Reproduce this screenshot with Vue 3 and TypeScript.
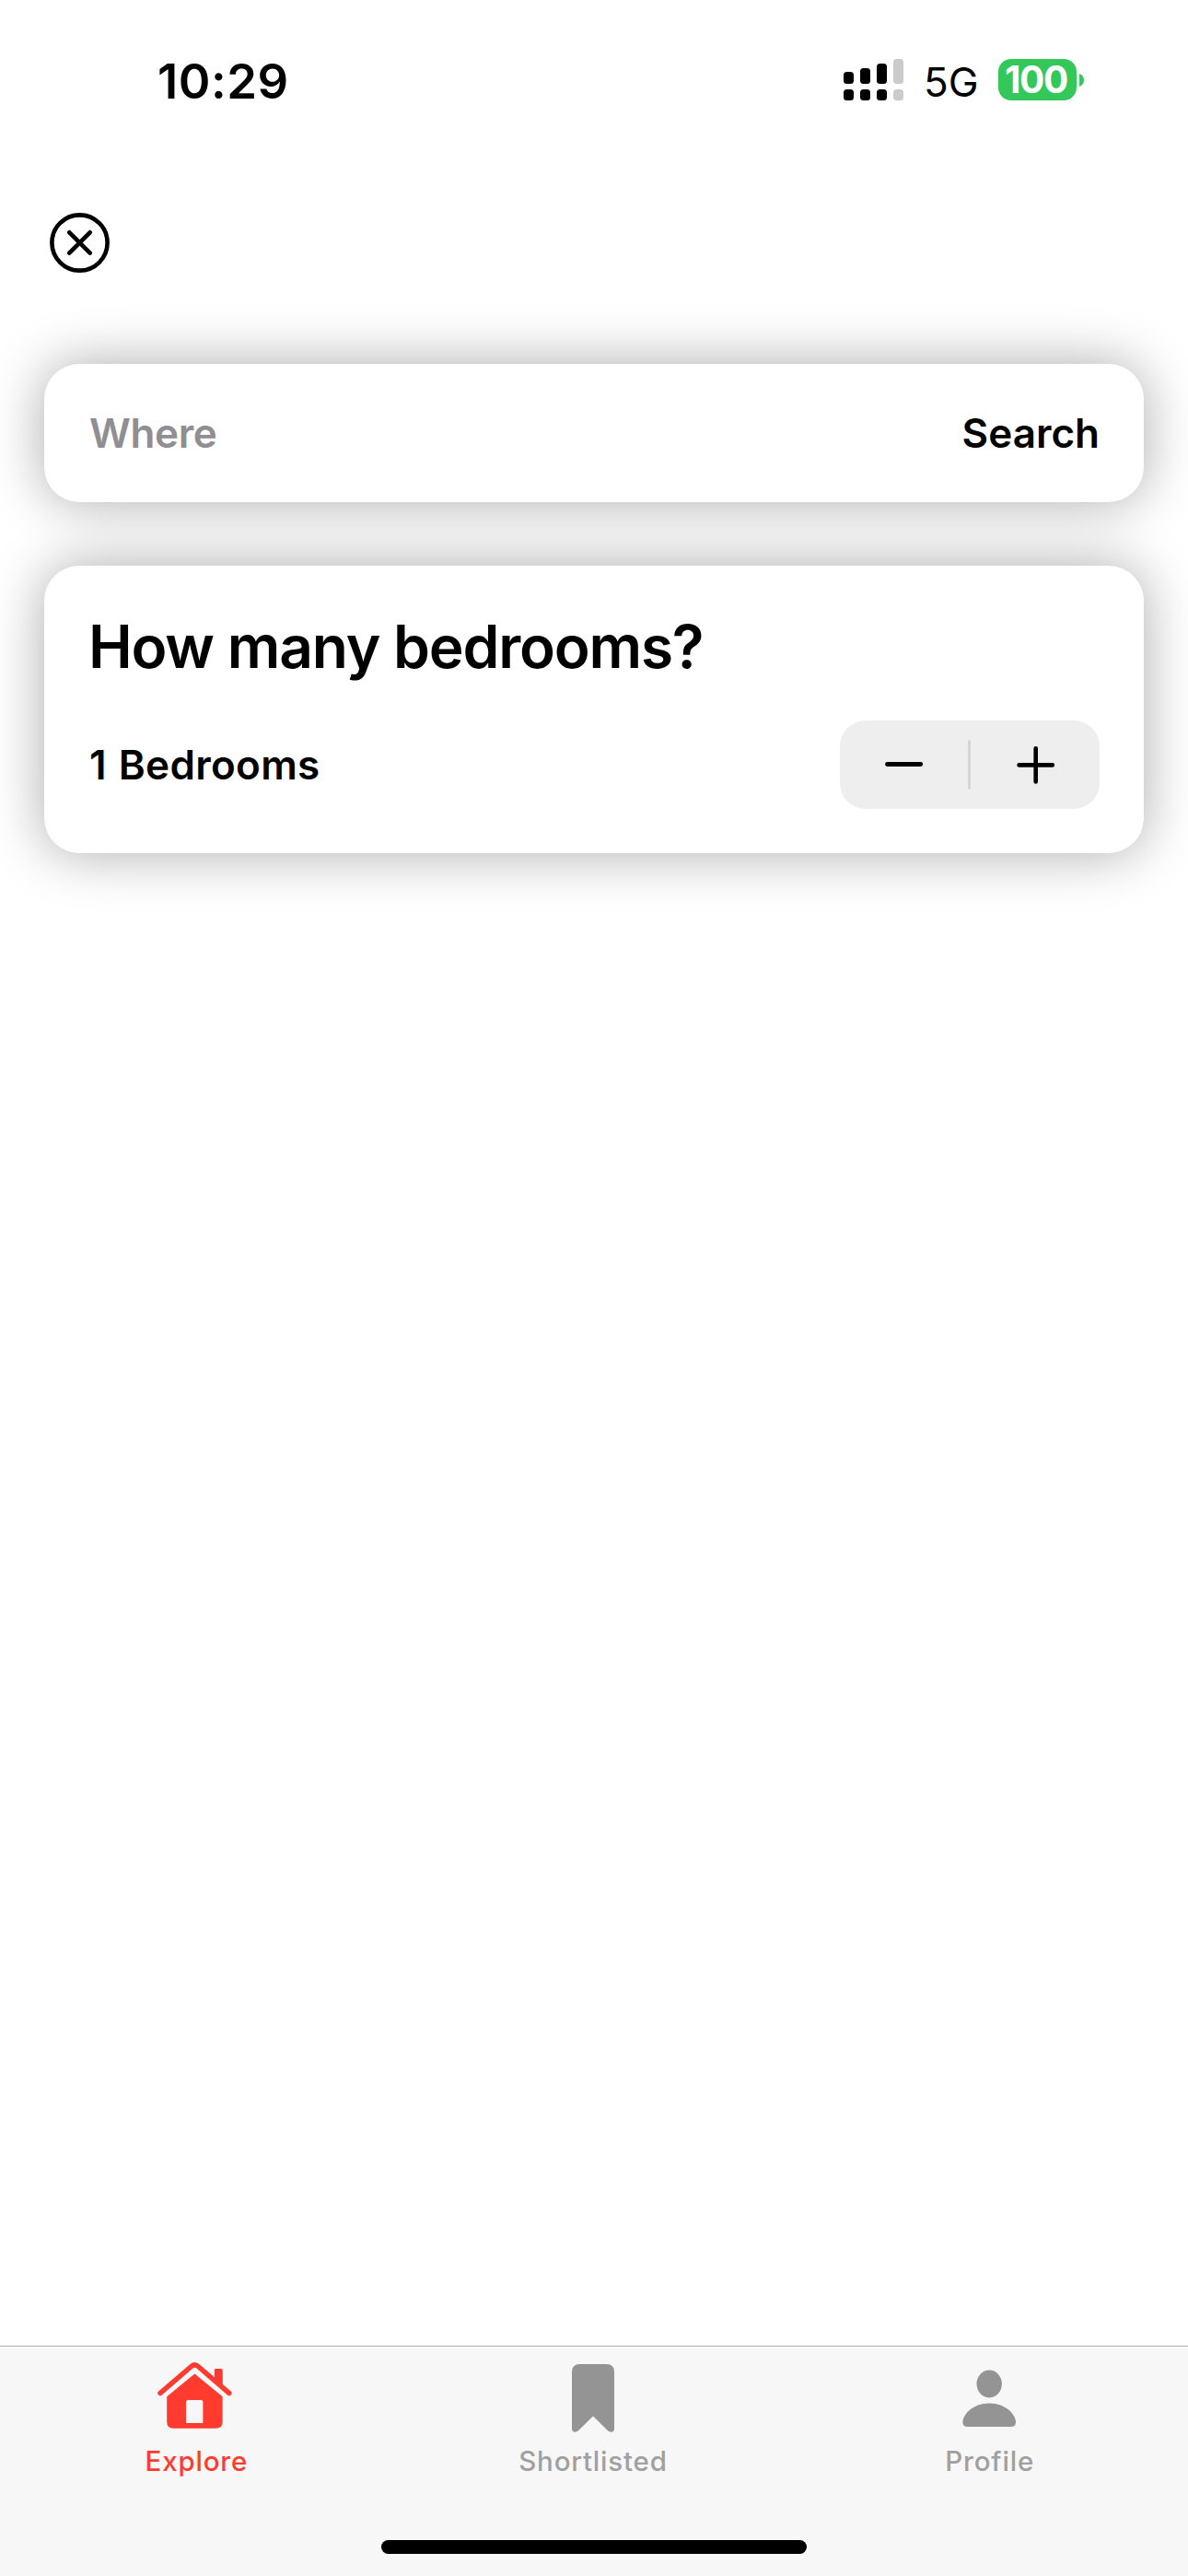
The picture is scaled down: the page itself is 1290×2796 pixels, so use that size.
<script setup lang="ts">
import { ref } from 'vue'

const where = ref('')
const bedrooms = ref(1)
const active = ref('Explore')

const bars = [13, 17, 22, 27]
const tabs = ['Explore', 'Shortlisted', 'Profile']

function change(step: number): void {
  bedrooms.value = Math.max(0, bedrooms.value + step)
}
</script>

<template>
  <div class="screen">
    <header class="status">
      <span class="time">10:29</span>
      <div class="indicators">
        <div class="signal">
          <div v-for="(h, i) in bars" :key="h" class="bar" :class="{ off: i === 3 }">
            <i :style="{ height: h + 'px' }"></i>
            <i class="dot"></i>
          </div>
        </div>
        <span class="network">5G</span>
        <div class="battery"><span>100</span></div>
        <svg class="nub" width="5" height="14" viewBox="0 0 5 14"><path d="M0 0Q5 2 5 7T0 14Z" fill="#34c759" /></svg>
      </div>
    </header>

    <button class="close" aria-label="Close">
      <svg width="67" height="67" viewBox="0 0 67 67" fill="none" stroke="#000" stroke-width="4.6" stroke-linecap="round">
        <circle cx="33.5" cy="33.5" r="30.1" />
        <path d="M22.3 22.3 44.7 44.7M44.7 22.3 22.3 44.7" />
      </svg>
    </button>

    <main class="cards">
      <section class="card search">
        <span class="where">{{ where || 'Where' }}</span>
        <span class="go">Search</span>
      </section>

      <section class="card rooms">
        <h1>How many bedrooms?</h1>
        <div class="row">
          <span class="count">{{ bedrooms }} Bedrooms</span>
          <div class="stepper">
            <button aria-label="Fewer" @click="change(-1)">
              <svg width="42" height="42" viewBox="0 0 42 42"><path d="M2.5 20.5h36.2" stroke="#000" stroke-width="4.8" stroke-linecap="round" /></svg>
            </button>
            <i class="divider"></i>
            <button aria-label="More" @click="change(1)">
              <svg width="42" height="42" viewBox="0 0 42 42"><path d="M3.6 21.4h36.2M21.7 3.3v36.2" stroke="#000" stroke-width="4.6" stroke-linecap="round" /></svg>
            </button>
          </div>
        </div>
      </section>
    </main>

    <footer class="tabbar">
      <nav>
        <a v-for="tab in tabs" :key="tab" :class="[tab.toLowerCase(), { active: active === tab }]" @click="active = tab">
          <svg v-if="tab === 'Explore'" width="84" height="78" viewBox="0.6 0.6 84 78">
            <path d="M3.5 38.2 37.6 8.9Q41 6 44.4 8.9L78.5 38.2" fill="none" stroke="currentColor" stroke-width="5.4" stroke-linecap="round" />
            <path d="M62.4 26V13Q62.4 11.6 64.2 11.6H69.6Q71.4 11.6 71.4 13.4V34Z" fill="currentColor" />
            <path fill-rule="evenodd" d="M41 17 71.2 41.8V69.3Q71.2 76.3 64.2 76.3H17.8Q10.8 76.3 10.8 69.3V41.8ZM33.8 45.6Q31.8 45.6 31.8 47.6V70.5H50V47.6Q50 45.6 48 45.6Z" fill="currentColor" />
          </svg>
          <svg v-else-if="tab === 'Shortlisted'" width="48" height="78" viewBox="0 0.3 48 78">
            <path d="M9.5 6.3H38.5Q47 6.3 47 14.8V76Q47 80 43.5 80Q41.5 80 39.5 78L24.8 63.5Q24 62.7 23.2 63.5L8.5 78Q6.5 80 4.5 80Q1 80 1 76V14.8Q1 6.3 9.5 6.3Z" fill="currentColor" />
          </svg>
          <svg v-else width="60" height="78" viewBox="0.8 0 60 78">
            <ellipse cx="30" cy="27.5" rx="13.7" ry="15" fill="currentColor" />
            <path d="M6.5 74Q1.2 74 1.2 69C1.2 61 12 48.5 30 48.5S58.8 61 58.8 69Q58.8 74 53.5 74Z" fill="currentColor" />
          </svg>
          <span>{{ tab }}</span>
        </a>
      </nav>
      <div class="home"></div>
    </footer>
  </div>
</template>

<style>
body {
  margin: 0;
  background: #fff;
}
</style>

<style scoped>
.screen {
  display: flex;
  flex-direction: column;
  width: 1290px;
  height: 2796px;
  overflow: hidden;
  background: #fff;
  color: #000;
  font-family: Inter, 'Liberation Sans', sans-serif;
  font-weight: 600;
}

.screen * {
  box-sizing: border-box;
}

span,
h1 {
  white-space: nowrap;
}

button {
  display: flex;
  align-items: center;
  justify-content: center;
  padding: 0;
  border: 0;
  background: none;
}

svg {
  display: block;
  overflow: visible;
}

.status {
  display: flex;
  justify-content: space-between;
  height: 230px;
  padding: 0 113px 0 171px;
}

.time {
  margin-top: 58px;
  font-size: 52.6px;
  line-height: 60px;
  letter-spacing: 0.5px;
}

.indicators {
  display: flex;
  align-items: center;
  height: 45px;
  margin-top: 64px;
}

.signal {
  display: flex;
  align-items: flex-end;
  gap: 7px;
  height: 45px;
  margin-right: 22px;
}

.bar {
  display: flex;
  flex-direction: column;
  gap: 6px;
  width: 11px;
}

.bar i {
  border-radius: 3.5px;
  background: #000;
}

.bar .dot {
  height: 12px;
}

.bar.off i {
  background: #cbcbcb;
}

.network {
  width: 60px;
  margin: 6px 21px 0 0;
  font-size: 44px;
  font-weight: 400;
  line-height: 45px;
}

.battery {
  display: flex;
  align-items: center;
  justify-content: center;
  width: 85px;
  height: 45px;
  padding-right: 3px;
  border-radius: 14px;
  background: #34c759;
  color: #fff;
  font-size: 40.5px;
  font-weight: 700;
  letter-spacing: -1.3px;
}

.nub {
  margin-left: 3px;
}

.close {
  width: 67px;
  height: 67px;
  margin-left: 53px;
}

.cards {
  display: flex;
  flex: 1;
  flex-direction: column;
  gap: 69px;
  padding: 98px 48px 0;
}

.card {
  border-radius: 38px;
  background: #fff;
  box-shadow: 0 0 60px rgba(0, 0, 0, 0.33);
  font-size: 44px;
}

.search {
  display: flex;
  align-items: center;
  justify-content: space-between;
  height: 150px;
  padding: 0 48px 0 49px;
}

.where {
  color: #8e8e93;
  letter-spacing: -0.4px;
}

.rooms {
  height: 312px;
  padding: 48px;
}

h1 {
  margin: 0 0 40px;
  font-size: 64px;
  font-weight: 600;
  line-height: 80px;
  letter-spacing: -1.2px;
}

.row {
  display: flex;
  align-items: center;
  justify-content: space-between;
}

.count {
  padding-left: 1px;
  letter-spacing: 0.3px;
  word-spacing: 1.5px;
}

.stepper {
  display: flex;
  align-items: center;
  width: 282px;
  height: 96px;
  padding-right: 1px;
  border-radius: 28px;
  background: #eee;
}

.stepper button {
  flex: 1;
}

.divider {
  width: 3px;
  height: 54px;
  border-radius: 1.5px;
  background: #d5d5d5;
}

.tabbar {
  display: flex;
  flex-direction: column;
  align-items: center;
  justify-content: space-between;
  height: 250px;
  padding-bottom: 24px;
  border-top: 1px solid #b2b2b2;
  background: #f7f7f7;
}

nav {
  display: flex;
  width: 1292px;
  margin-left: -2px;
  padding-top: 13px;
}

nav a {
  display: flex;
  flex: 1;
  flex-direction: column;
  align-items: center;
  color: #949494;
}

nav span {
  margin-top: 13px;
  color: #a0a0a0;
  font-size: 29.5px;
  font-weight: 500;
  line-height: 40px;
  letter-spacing: 0.8px;
}

nav a.active,
nav a.active span {
  color: #ff3b30;
}

.home {
  width: 462px;
  height: 15px;
  border-radius: 7.5px;
  background: #000;
}
</style>
